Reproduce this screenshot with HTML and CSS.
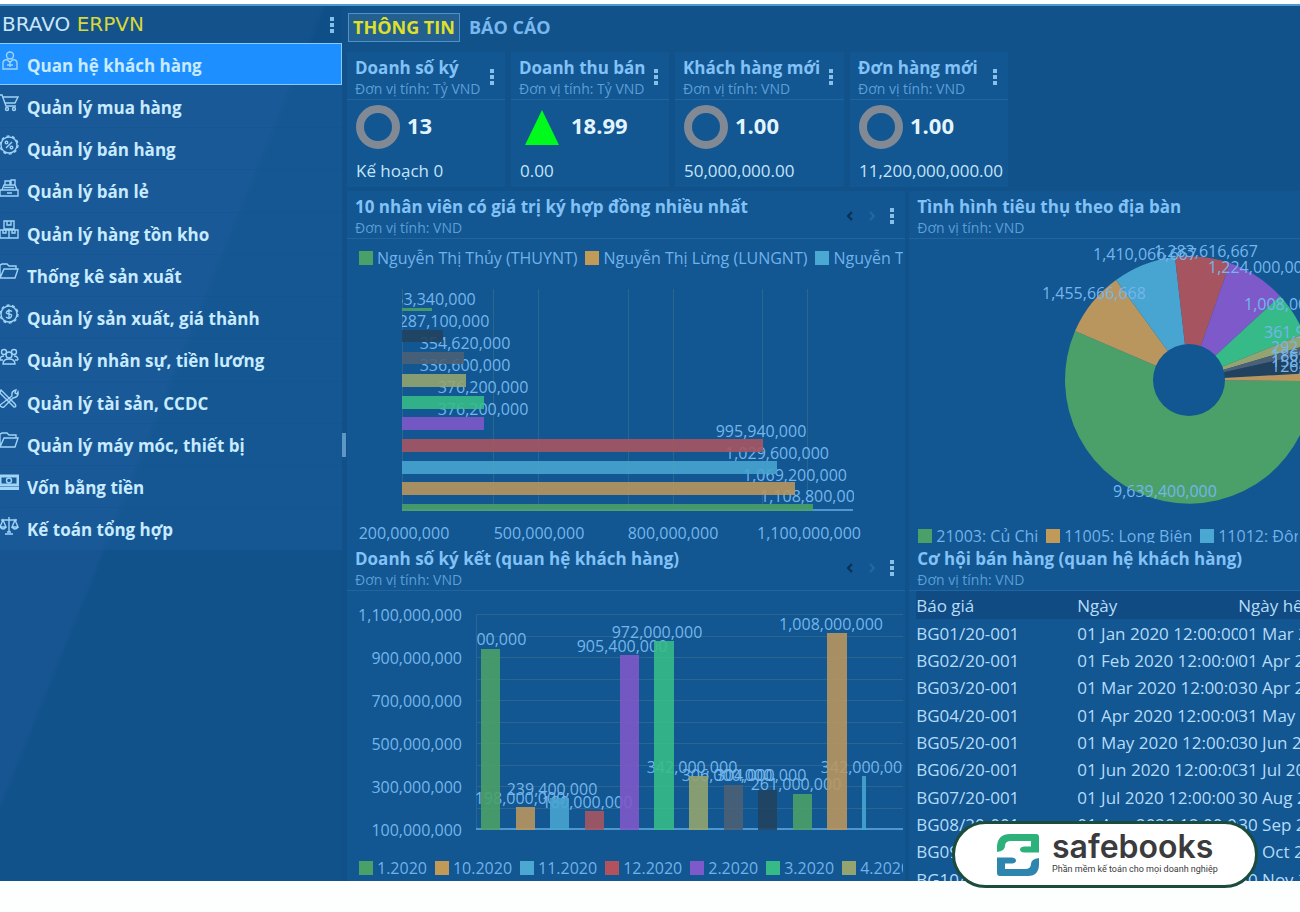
FILE: index.html
```html
<!DOCTYPE html>
<html lang="vi">
<head>
<meta charset="utf-8">
<title>BRAVO ERPVN</title>
<link rel="stylesheet" href="styles.css">
</head>
<body>
<div class="app">
  <aside class="sidebar">
    <header class="brand-bar">
      <h1 class="brand">BRAVO <span class="brand-accent">ERPVN</span></h1>
      <button class="kebab" aria-label="Menu"><i></i><i></i><i></i></button>
    </header>
    <nav>
      <ul class="menu">
        <li><a class="menu-link is-active" href="#"><svg class="icon" viewBox="0 0 20 20"><circle cx="11" cy="4.500" r="3.500"/><path d="M4 18V12q0-3 4-3.500l3 3 3-3q4 .5 4 3.500v6zM8 14h6M11 12v4"/></svg>Quan hệ khách hàng</a></li>
        <li><a class="menu-link" href="#"><svg class="icon" viewBox="0 0 20 20"><path d="M0 2h3l4 11h10M4 4h15l-3 6H6"/><circle cx="8" cy="16" r="1.500"/><circle cx="15" cy="16" r="1.500"/></svg>Quản lý mua hàng</a></li>
        <li><a class="menu-link" href="#"><svg class="icon" viewBox="0 0 20 20"><circle cx="10" cy="10" r="8"/><circle class="teeth" cx="10" cy="10" r="9"/><path d="M7 13l6-6"/><circle cx="7.500" cy="7.500" r="1.300"/><circle cx="12.500" cy="12.500" r="1.300"/></svg>Quản lý bán hàng</a></li>
        <li><a class="menu-link" href="#"><svg class="icon" viewBox="0 0 20 20"><path d="M1 12h18v6H1zM3 12l2-5h11l2 5M6 7V3h5v4M12 7V2h4v5M5 9.500h10M8 15h5"/></svg>Quản lý bán lẻ</a></li>
        <li><a class="menu-link" href="#"><svg class="icon" viewBox="0 0 20 20"><path d="M5 1h10v8H5zM1 10h9v8H1zM10 10h9v8h-9zM8 1v4h4V1M4 10v3h3v-3M13 10v3h3v-3"/></svg>Quản lý hàng tồn kho</a></li>
        <li><a class="menu-link" href="#"><svg class="icon" viewBox="0 0 20 20"><path d="M1 16V3l2-1h5l2 2h7v3M1 16L5 7h14l-3 9z"/></svg>Thống kê sản xuất</a></li>
        <li><a class="menu-link" href="#"><svg class="icon" viewBox="0 0 20 20"><circle cx="10" cy="10" r="8"/><circle class="teeth" cx="10" cy="10" r="9"/><path d="M13 7.500q-3-2-5 0t2 2.500 2 3-5 0M10 5v10"/></svg>Quản lý sản xuất, giá thành</a></li>
        <li><a class="menu-link" href="#"><svg class="icon" viewBox="0 0 20 20"><circle cx="5" cy="5" r="2.500"/><circle cx="15" cy="5" r="2.500"/><circle cx="10" cy="8" r="3"/><path d="M4 17q0-5 6-5t6 5zM1 13q0-4 4-4M19 13q0-4-4-4M1 13h3M16 13h3"/></svg>Quản lý nhân sự, tiền lương</a></li>
        <li><a class="menu-link" href="#"><svg class="icon" viewBox="0 0 20 20"><path d="M2 1l6 6 8 8q2 3-1 3L7 10 1 4zM13 7q-1-5 4-6l-1 3 2 1 1-2q1 5-5 6l-9 9q-3 1-4-2z"/></svg>Quản lý tài sản, CCDC</a></li>
        <li><a class="menu-link" href="#"><svg class="icon" viewBox="0 0 20 20"><path d="M1 16V3l2-1h5l2 2h7v3M1 16L5 7h14l-3 9z"/></svg>Quản lý máy móc, thiết bị</a></li>
        <li><a class="menu-link" href="#"><svg class="icon" viewBox="0 0 20 20"><path class="thick" d="M1 3h18v9H1z"/><circle cx="10" cy="7.500" r="2.500"/><path class="thick" d="M0 15.500h20"/></svg>Vốn bằng tiền</a></li>
        <li><a class="menu-link" href="#"><svg class="icon" viewBox="0 0 20 20"><path d="M10 1v15M6 18h8M8 16h4M2 4h16M4 4l-3 7h6zM16 4l-3 7h6zM1 11q3 4 6 0M13 11q3 4 6 0"/></svg>Kế toán tổng hợp</a></li>
      </ul>
    </nav>
  </aside>
  <div class="splitter"></div>

  <main class="main">
    <nav class="tabs">
      <button class="tab is-current">THÔNG TIN</button>
      <button class="tab">BÁO CÁO</button>
    </nav>

    <section class="cards">
      <article class="card">
        <header class="card-head"><div><h2 class="title">Doanh số ký</h2><p class="unit">Đơn vị tính: Tỷ VND</p></div><button class="kebab" aria-label="Tùy chọn"><i></i><i></i><i></i></button></header>
        <div class="kpi"><span class="ring"></span><strong>13</strong></div>
        <p class="card-foot">Kế hoạch 0</p>
      </article>
      <article class="card">
        <header class="card-head"><div><h2 class="title">Doanh thu bán</h2><p class="unit">Đơn vị tính: Tỷ VND</p></div><button class="kebab" aria-label="Tùy chọn"><i></i><i></i><i></i></button></header>
        <div class="kpi"><svg class="up" viewBox="0 0 44 44"><path d="M22 5L39 40H5z"/></svg><strong>18.99</strong></div>
        <p class="card-foot">0.00</p>
      </article>
      <article class="card card-wide">
        <header class="card-head"><div><h2 class="title">Khách hàng mới</h2><p class="unit">Đơn vị tính: VND</p></div><button class="kebab" aria-label="Tùy chọn"><i></i><i></i><i></i></button></header>
        <div class="kpi"><span class="ring"></span><strong>1.00</strong></div>
        <p class="card-foot">50,000,000.00</p>
      </article>
      <article class="card">
        <header class="card-head"><div><h2 class="title">Đơn hàng mới</h2><p class="unit">Đơn vị tính: VND</p></div><button class="kebab" aria-label="Tùy chọn"><i></i><i></i><i></i></button></header>
        <div class="kpi"><span class="ring"></span><strong>1.00</strong></div>
        <p class="card-foot">11,200,000,000.00</p>
      </article>
    </section>

    <div class="panels">
      <section class="panel">
        <header class="panel-head">
          <div><h2 class="title">10 nhân viên có giá trị ký hợp đồng nhiều nhất</h2><p class="unit">Đơn vị tính: VND</p></div>
          <div class="tools"><button class="arrow" aria-label="Trước"><svg viewBox="0 0 8 12"><path d="M6 2L2 6l4 4"/></svg></button><button class="arrow arrow-off" aria-label="Sau"><svg viewBox="0 0 8 12"><path d="M2 2l4 4-4 4"/></svg></button><button class="kebab" aria-label="Tùy chọn"><i></i><i></i><i></i></button></div>
        </header>
        <ul class="legend">
          <li><i class="swatch green"></i>Nguyễn Thị Thủy (THUYNT)</li>
          <li><i class="swatch orange"></i>Nguyễn Thị Lừng (LUNGNT)</li>
          <li><i class="swatch cyan"></i>Nguyễn Thị Hoa (HOANT)</li>
        </ul>
        <svg class="chart chart-rows">
          <clipPath id="rows-clip"><rect x="55" y="0" width="452" height="240"/></clipPath>
          <path class="grid-line" d="M55.500 10v222M146.500 10v222M191.500 10v222M281.500 10v222M326.500 10v222M415.500 10v222M460.500 10v222"/>
          <g clip-path="url(#rows-clip)">
            <g class="label mid">
              <text x="88" y="26">53,340,000</text>
              <text x="97" y="48">287,100,000</text>
              <text x="118" y="70">354,620,000</text>
              <text x="118" y="92">336,600,000</text>
              <text x="136" y="114">376,200,000</text>
              <text x="136" y="136">376,200,000</text>
              <text x="414" y="158">995,940,000</text>
              <text x="430" y="180">1,029,600,000</text>
              <text x="448" y="202">1,069,200,000</text>
              <text x="465" y="223">1,108,800,000</text>
            </g>
            <path class="axis" d="M55 231h451"/>
            <g class="bars">
              <rect class="green" x="55" y="29" width="30" height="3"/>
              <rect class="dark" x="55" y="51" width="41" height="12"/>
              <rect class="gray" x="55" y="73" width="62" height="12"/>
              <rect class="khaki" x="55" y="95" width="64" height="13"/>
              <rect class="mint" x="55" y="117" width="82" height="13"/>
              <rect class="purple" x="55" y="138" width="82" height="13"/>
              <rect class="red" x="55" y="160" width="361" height="13"/>
              <rect class="cyan" x="55" y="182" width="375" height="13"/>
              <rect class="orange" x="55" y="203" width="393" height="13"/>
              <rect class="green" x="55" y="225" width="411" height="7"/>
            </g>
          </g>
          <g class="label mid">
            <text x="57" y="260">200,000,000</text>
            <text x="192" y="260">500,000,000</text>
            <text x="326" y="260">800,000,000</text>
            <text x="462" y="260">1,100,000,000</text>
          </g>
        </svg>
      </section>

      <section class="panel">
        <header class="panel-head">
          <div><h2 class="title">Tình hình tiêu thụ theo địa bàn</h2><p class="unit">Đơn vị tính: VND</p></div>
        </header>
        <svg class="chart chart-pie">
          <g class="slices" transform="translate(280 141)">
            <path class="green" d="M0 0L124 1A124 124 0 1 1-114-49z"/>
            <path class="orange" d="M0 0L-114-49A124 124 0 0 1-73-100z"/>
            <path class="cyan" d="M0 0L-73-100A124 124 0 0 1-14-123z"/>
            <path class="red" d="M0 0L-14-123A124 124 0 0 1 41-117z"/>
            <path class="purple" d="M0 0L41-117A124 124 0 0 1 91-84z"/>
            <path class="mint" d="M0 0L91-84A124 124 0 0 1 115-46z"/>
            <path class="khaki" d="M0 0L115-46A124 124 0 0 1 119-35z"/>
            <path class="gray" d="M0 0L119-35A124 124 0 0 1 121-27z"/>
            <path class="dark" d="M0 0L121-27A124 124 0 0 1 124-7z"/>
            <path class="orange" d="M0 0L124-7A124 124 0 0 1 124 1z"/>
            <circle class="hole" r="36"/>
          </g>
          <g class="label">
            <text x="184" y="21">1,410,066,667</text>
            <text x="245" y="18">1,283,616,667</text>
            <text x="299" y="34">1,224,000,000</text>
            <text x="133" y="60">1,455,666,668</text>
            <text x="335" y="71">1,008,000,000</text>
            <text x="355" y="99">361,900,000</text>
            <text x="362" y="114">292,000,000</text>
            <text x="362" y="122">186,480,000</text>
            <text x="362" y="128">158,400,000</text>
            <text x="362" y="133">126,000,000</text>
            <text x="204" y="258">9,639,400,000</text>
          </g>
        </svg>
        <ul class="legend legend-low">
          <li><i class="swatch green"></i>21003: Củ Chi</li>
          <li><i class="swatch orange"></i>11005: Long Biên</li>
          <li><i class="swatch cyan"></i>11012: Đông Anh</li>
        </ul>
      </section>

      <section class="panel">
        <header class="panel-head">
          <div><h2 class="title">Doanh số ký kết (quan hệ khách hàng)</h2><p class="unit">Đơn vị tính: VND</p></div>
          <div class="tools"><button class="arrow" aria-label="Trước"><svg viewBox="0 0 8 12"><path d="M6 2L2 6l4 4"/></svg></button><button class="arrow arrow-off" aria-label="Sau"><svg viewBox="0 0 8 12"><path d="M2 2l4 4-4 4"/></svg></button><button class="kebab" aria-label="Tùy chọn"><i></i><i></i><i></i></button></div>
        </header>
        <svg class="chart chart-cols">
          <clipPath id="cols-clip"><rect x="129" y="0" width="427" height="258"/></clipPath>
          <path class="grid-line" d="M129.500 23v215M129 23.500h427M129 45.500h427M129 66.500h427M129 88.500h427M129 109.500h427M129 131.500h427M129 152.500h427M129 174.500h427M129 195.500h427M129 217.500h427"/>
          <path class="axis" d="M129 238h427"/>
          <g clip-path="url(#cols-clip)">
            <g class="label mid">
              <text x="134" y="54">942,000,000</text>
              <text x="173" y="213">198,000,000</text>
              <text x="205" y="204">239,400,000</text>
              <text x="240" y="217">180,000,000</text>
              <text x="275" y="61">905,400,000</text>
              <text x="310" y="47">972,000,000</text>
              <text x="345" y="182">342,000,000</text>
              <text x="380" y="190">306,000,000</text>
              <text x="414" y="190">304,000,000</text>
              <text x="449" y="199">261,000,000</text>
              <text x="484" y="39">1,008,000,000</text>
              <text x="519" y="182">342,000,000</text>
            </g>
            <g class="bars">
              <rect class="green" x="134" y="58" width="19" height="181"/>
              <rect class="orange" x="169" y="216" width="19" height="23"/>
              <rect class="cyan" x="203" y="207" width="19" height="32"/>
              <rect class="red" x="238" y="220" width="19" height="19"/>
              <rect class="purple" x="273" y="64" width="19" height="175"/>
              <rect class="mint" x="307" y="50" width="20" height="189"/>
              <rect class="khaki" x="342" y="185" width="19" height="54"/>
              <rect class="gray" x="377" y="194" width="19" height="45"/>
              <rect class="dark" x="411" y="199" width="19" height="40"/>
              <rect class="green" x="446" y="203" width="19" height="36"/>
              <rect class="orange" x="480" y="42" width="20" height="197"/>
              <rect class="cyan" x="515" y="185" width="4" height="54"/>
            </g>
          </g>
          <g class="label end">
            <text x="115" y="30">1,100,000,000</text>
            <text x="115" y="73">900,000,000</text>
            <text x="115" y="116">700,000,000</text>
            <text x="115" y="159">500,000,000</text>
            <text x="115" y="202">300,000,000</text>
            <text x="115" y="245">100,000,000</text>
          </g>
        </svg>
        <ul class="legend">
          <li><i class="swatch green"></i>1.2020</li>
          <li><i class="swatch orange"></i>10.2020</li>
          <li><i class="swatch cyan"></i>11.2020</li>
          <li><i class="swatch red"></i>12.2020</li>
          <li><i class="swatch purple"></i>2.2020</li>
          <li><i class="swatch mint"></i>3.2020</li>
          <li><i class="swatch khaki"></i>4.2020</li>
        </ul>
      </section>

      <section class="panel">
        <header class="panel-head">
          <div><h2 class="title">Cơ hội bán hàng (quan hệ khách hàng)</h2><p class="unit">Đơn vị tính: VND</p></div>
        </header>
        <table class="quotes">
          <thead><tr><th>Báo giá</th><th>Ngày</th><th>Ngày hết hạn</th></tr></thead>
          <tbody>
            <tr><td>BG01/20-001</td><td>01 Jan 2020 12:00:00</td><td>01 Mar 2020</td></tr>
            <tr><td>BG02/20-001</td><td>01 Feb 2020 12:00:00</td><td>01 Apr 2020</td></tr>
            <tr><td>BG03/20-001</td><td>01 Mar 2020 12:00:00</td><td>30 Apr 2020</td></tr>
            <tr><td>BG04/20-001</td><td>01 Apr 2020 12:00:00</td><td>31 May 2020</td></tr>
            <tr><td>BG05/20-001</td><td>01 May 2020 12:00:00</td><td>30 Jun 2020</td></tr>
            <tr><td>BG06/20-001</td><td>01 Jun 2020 12:00:00</td><td>31 Jul 2020</td></tr>
            <tr><td>BG07/20-001</td><td>01 Jul 2020 12:00:00</td><td>30 Aug 2020</td></tr>
            <tr><td>BG08/20-001</td><td>01 Aug 2020 12:00:00</td><td>30 Sep 2020</td></tr>
            <tr><td>BG09/20-001</td><td>01 Sep 2020 12:00:00</td><td>31 Oct 2020</td></tr>
            <tr><td>BG10/20-001</td><td>01 Oct 2020 12:00:00</td><td>30 Nov 2020</td></tr>
          </tbody>
        </table>
      </section>
    </div>
  </main>
</div>

<aside class="badge">
  <svg class="badge-mark" viewBox="0 0 42 42">
    <path class="mark-top" d="M0 18V12Q1 0 13 0H39Q42 0 42 3V18.500H27Q23 18 23 15.500T27 12.500H34V7H14Q8 7 8 12Q8 17 0 18z"/>
    <path class="mark-low" transform="rotate(180 21 21)" d="M0 18V12Q0 0 11 0H39Q42 0 42 3V18.500H27Q23 18 23 15.500T27 12.500H34V7H14Q8 7 8 12Q8 17 0 18z"/>
  </svg>
  <div class="badge-text"><p class="badge-name">safebooks</p><p class="badge-note">Phần mềm kế toán cho mọi doanh nghiệp</p></div>
</aside>
</body>
</html>
```
FILE: styles.css
```css
* { box-sizing: border-box; }

body {
  margin: 0;
  height: 100vh;
  padding: 4px 0 31px;
  position: relative;
  overflow: hidden;
  background: #fdfefe;
  font-family: "Open Sans", "Noto Sans", sans-serif;
  font-size: 16px;
  color: #7dbdf2;
}

h1, h2, p, ul { margin: 0; padding: 0; }
ul { list-style: none; }
button { border: 0; padding: 0; background: none; font: inherit; color: inherit; }

.app {
  display: flex;
  height: 100%;
  overflow: hidden;
  background: #11528b;
  border-top: 2px solid #4c9bd0;
}

/* Sidebar */
.sidebar {
  flex: 0 0 342px;
  background: linear-gradient(112deg, #175592 46%, #11528b 47%);
}
.brand-bar {
  display: flex;
  align-items: center;
  justify-content: space-between;
  height: 37px;
  padding: 0 8px 0 2px;
  background: rgba(10, 70, 120, 0.2);
}
.brand {
  font: 400 20px/37px "DejaVu Sans", sans-serif;
  color: #c9e6fb;
}
.brand-accent { color: #d8d838; }

.kebab { display: flex; flex-direction: column; gap: 2px; }
.kebab i { width: 4px; height: 4px; background: #86bfe9; }

.menu { background: rgba(29, 98, 163, 0.3); }
.menu-link {
  display: flex;
  align-items: center;
  gap: 8px;
  height: 42px;
  border: 1px solid transparent;
  border-top-color: rgba(10, 70, 125, 0.1);
  padding: 2px 8px 0 0;
  font-size: 17px;
  font-weight: 700;
  color: #c8ebff;
  text-decoration: none;
  white-space: nowrap;
}
.menu li:nth-child(4n) .menu-link { height: 43px; }
.menu-link.is-active { background: #1e8fff; border-color: #86cbff; border-left: 0; padding-left: 1px; }
.icon {
  flex: none;
  width: 20px;
  height: 20px;
  margin: 0 0 8px -2px;
  fill: none;
  stroke: #9fd3f7;
  stroke-width: 1.4;
}
.teeth { stroke-dasharray: 3 2.650; }
.thick { stroke-width: 3; }

.splitter {
  flex: 0 0 5px;
  background: linear-gradient(#5f97c4, #5f97c4) left 427px / 4px 24px no-repeat, #125089;
}

/* Main area */
.main {
  flex: 1;
  min-width: 0;
  display: flex;
  flex-direction: column;
}
.tabs { display: flex; align-items: flex-start; gap: 4px; height: 46px; padding: 7px 1px; }
.tab {
  height: 29px;
  padding: 0 4px;
  border: 1px solid transparent;
  font-size: 18px;
  line-height: 27px;
  font-weight: 700;
  color: #78b8ee;
}
.tab.is-current { color: #dfe02c; background: #235f8f; border-color: #4d92cf; }

.cards { display: flex; gap: 6px; margin-bottom: 4px; }
.card { flex: 0 0 158px; height: 135px; background: #125692; }
.card-wide { flex-basis: 169px; }
.card-head, .panel-head {
  display: flex;
  align-items: center;
  justify-content: space-between;
  height: 48px;
  padding: 2px 11px 0 8px;
  border-bottom: 1px solid #20659f;
  white-space: nowrap;
}
.title { font-size: 17px; line-height: 24px; font-weight: 700; color: #82c2f6; }
.unit { font-size: 14px; line-height: 18px; color: #5c9fd8; }
.kpi { display: flex; align-items: center; gap: 7px; height: 54px; padding-left: 9px; }
.kpi strong { margin-bottom: 4px; font-size: 22px; color: #e2f5ff; }
.ring { width: 44px; height: 44px; border: 8px solid #818995; border-radius: 50%; }
.up { width: 44px; height: 44px; fill: #00fa1c; }
.card-foot { padding-left: 9px; font-size: 17px; line-height: 33px; color: #c4e5fb; }

.panels {
  flex: 1;
  min-height: 0;
  display: grid;
  grid-template-columns: minmax(0, 10fr) minmax(0, 7fr);
  grid-template-rows: 352px minmax(0, 1fr);
  column-gap: 4px;
}
.panel { background: #125692; overflow: hidden; }
.tools { display: flex; align-items: center; gap: 14px; }
.arrow { width: 8px; height: 12px; display: flex; }
.arrow svg { fill: none; stroke: #0a2f55; stroke-width: 2; }
.arrow-off svg { stroke: #2867a0; }

.legend {
  display: flex;
  gap: 8px;
  margin: 0 2px 0 12px;
  overflow: hidden;
  white-space: nowrap;
  line-height: 22px;
  height: 40px;
  padding-top: 8px;
  color: #70b2ea;
}
.legend li { display: flex; align-items: center; height: 22px; gap: 4px; }
.legend-low { height: 28px; padding: 0; margin-left: 9px; }
.swatch { flex: none; width: 14px; height: 14px; }

.green { fill: #4aa068; background: #4aa068; }
.orange { fill: #b8965e; background: #c29a58; }
.cyan { fill: #48a4d0; background: #4aa8d2; }
.red { fill: #a65560; background: #b2525c; }
.purple { fill: #7e59ca; background: #7e59ca; }
.mint { fill: #36bb88; background: #36bb88; }
.khaki { fill: #93a470; background: #93a470; }
.gray { fill: #4c6076; background: #4c6076; }
.dark { fill: #21425f; background: #21425f; }

.chart { display: block; width: 100%; overflow: hidden; }
.chart-rows { height: 264px; }
.chart-pie { height: 286px; }
.chart-cols { height: 258px; }
.grid-line { fill: none; stroke: #2b668f; }
.axis { stroke: #4f97cf; stroke-width: 2; }
.label text { font-size: 16px; fill: #74b6ec; }
.mid { text-anchor: middle; }
.end { text-anchor: end; }
.bars rect { opacity: 0.9; }
.hole { fill: #125692; }

.quotes {
  width: 483px;
  margin-left: 7px;
  table-layout: fixed;
  border-collapse: collapse;
  font-size: 17px;
  color: #b5dcf9;
}
.quotes th, .quotes td {
  height: 27px;
  padding: 2px 0 0;
  overflow: hidden;
  font-weight: 400;
  line-height: 24px;
  text-align: left;
  white-space: nowrap;
}
.quotes thead { background: #104b83; }
.quotes tr:nth-child(3n) td, .quotes thead th { height: 28px; }

/* Vendor badge over the dashboard */
.badge {
  position: absolute;
  right: 42px;
  bottom: 24px;
  width: 306px;
  height: 67px;
  display: flex;
  align-items: center;
  gap: 13px;
  padding-left: 42px;
  border: 3px solid #1c4c3b;
  border-radius: 34px;
  background: #fff;
  color: #3b3a3c;
}
.badge-mark { flex: none; width: 42px; height: 42px; }
.mark-top { fill: #2bb179; }
.mark-low { fill: #2e86ae; }
.badge-text { padding-bottom: 4px; }
.badge-name { font: 600 32px/32px Inter, sans-serif; }
.badge-note { font: 9px/12px Roboto, sans-serif; white-space: nowrap; }
```
